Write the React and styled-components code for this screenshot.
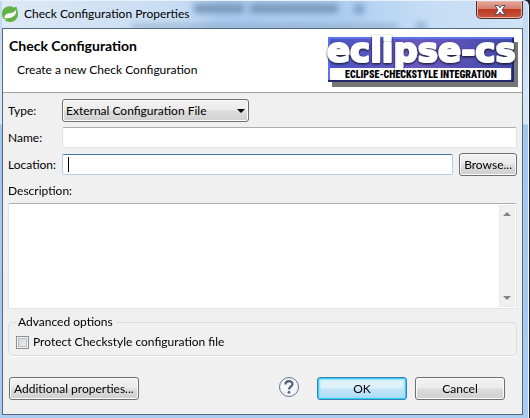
import React, { useState } from "react";
import styled, { createGlobalStyle, css } from "styled-components";

const GlobalStyle = createGlobalStyle`
  * {
    box-sizing: border-box;
  }
  body {
    margin: 0;
    background: #20242a;
    color: #000;
    font-family: Lato, "Open Sans", sans-serif;
    font-size: 12px;
    line-height: 16px;
  }
  button, input, select, textarea {
    font: inherit;
    color: inherit;
  }
`;

const Window = styled.div`
  min-height: 100vh;
  display: flex;
  flex-direction: column;
  padding: 0 5px 3px 2px;
  border-top: 1px solid #e8f1fa;
  border-right: 1px solid #e8f1fa;
  margin-right: 1px;
  border-radius: 0 6px 0 0;
  background: linear-gradient(#c3daf1 0, #c3daf1 28px, #d6e6f7 100px, #d6e6f7 123px, #a3c6ec 124px, #a9cdf2 100%);
`;

const TitleBar = styled.div`
  height: 27px;
  display: flex;
  align-items: flex-start;
  position: relative;
`;

const Backdrop = styled.div`
  position: absolute;
  inset: 0;
  overflow: hidden;
  background: linear-gradient(90deg, #dde9f6, #c6dbf2 35%, #a9caef 42%, #aecdf0 65%, #c4dcf4 80%, #cfe2f6);
  &:before {
    content: "";
    position: absolute;
    inset: 0;
    filter: blur(3px);
    background:
      linear-gradient(#7896b6, #7896b6) 192px 3px / 50px 9px no-repeat,
      linear-gradient(#7896b6, #7896b6) 248px 3px / 88px 9px no-repeat,
      linear-gradient(#7ba1cd, #7ba1cd) 352px 3px / 10px 10px no-repeat,
      linear-gradient(#809ebf, #809ebf) 130px 24px / 266px 6px no-repeat,
      linear-gradient(#7ba1cd, #7ba1cd) 414px 22px / 10px 7px no-repeat;
  }
`;

const Title = styled.div`
  flex: 1;
  display: flex;
  align-items: center;
  gap: 6px;
  height: 25px;
  position: relative;
`;

const CloseButton = styled.button`
  width: 47px;
  height: 18px;
  padding: 0;
  position: relative;
  display: flex;
  justify-content: center;
  align-items: center;
  border: 1px solid #5a2a2a;
  border-top: 0;
  border-radius: 0 0 5px 5px;
  box-shadow: inset 0 0 0 1px #e9b4a8;
  background: linear-gradient(#e6a99c, #d5806f 45%, #bb3a22 50%, #c8563b);
`;

const Client = styled.main`
  flex: 1;
  display: flex;
  flex-direction: column;
  border: 1px solid #56677c;
  background: #f0f0f0;
`;

const Header = styled.header`
  height: 64px;
  display: flex;
  justify-content: space-between;
  padding: 2px 2px 0 6px;
  background: #fff;
  border-bottom: 1px solid #a0a0a0;
`;

const Heading = styled.h1`
  margin: 7px 0 8px;
  font-size: 14px;
  font-weight: 700;
  line-height: 16px;
`;

const Subtitle = styled.p`
  margin: 0 8px;
`;

const Form = styled.form`
  flex: 1;
  display: flex;
  flex-direction: column;
  padding: 6px 5px 14px;
`;

const Fields = styled.div`
  display: grid;
  grid-template-columns: 48px 1fr auto;
  gap: 5px 6px;
  align-items: center;
`;

const field = css`
  border: 1px solid #e2e3ea;
  border-top-color: #abadb3;
  border-radius: 2px;
  background: #fff;
  outline: none;
`;

const TextInput = styled.input`
  ${field}
  width: 100%;
  height: 21px;
  padding: 0 5px;
  grid-column: ${(props) => (props.$wide ? "span 2" : "auto")};
  caret-color: transparent;
  &:focus {
    border-color: #b5cfe7;
    border-top-color: #3d7bad;
  }
  &:focus:placeholder-shown {
    background: linear-gradient(#000, #000) 5px 2px / 1px 15px no-repeat #fff;
  }
`;

const buttonFace = css`
  border: 1px solid #707070;
  border-radius: 3px;
  box-shadow: inset 0 0 0 1px #fbfbfb;
  background: linear-gradient(#f2f2f2, #ebebeb 48%, #dddddd 52%, #cfcfcf);
`;

const SelectWrap = styled.div`
  grid-column: span 2;
  justify-self: start;
  display: flex;
  align-items: center;
  position: relative;
  svg {
    position: absolute;
    right: 4px;
    pointer-events: none;
  }
`;

const Select = styled.select`
  ${buttonFace}
  appearance: none;
  width: 187px;
  height: 23px;
  padding: 0 18px 0 3px;
`;

const Button = styled.button`
  ${buttonFace}
  height: 23px;
  min-width: ${(props) => (props.$wide ? "90px" : "57px")};
  padding: 0 4px;
  white-space: nowrap;
  ${(props) =>
    props.$primary &&
    css`
      border-color: #3c7fb1;
      box-shadow: inset 0 0 0 1px #35cdf8, inset 0 0 2px 2px #8fe0fa;
      background: linear-gradient(#e6f4fc, #dcf0fb 48%, #c2e5f8 52%, #b0dcf5);
    `}
`;

const DescriptionLabel = styled.label`
  margin: 7px 0 4px;
`;

const AreaWrap = styled.div`
  ${field}
  flex: 1;
  min-height: 80px;
  display: flex;
  padding: 1px;
`;

const TextArea = styled.textarea`
  flex: 1;
  min-width: 0;
  padding: 2px 4px;
  border: 0;
  outline: none;
  resize: none;
  overflow: hidden;
`;

const ScrollBar = styled.div`
  width: 16px;
  display: flex;
  flex-direction: column;
  justify-content: space-between;
  align-items: center;
  padding: 6px 0;
  background: #f0f0f0;
  border: 1px solid #e9e9e9;
`;

const Group = styled.fieldset`
  margin: 5px 0 21px;
  padding: 4px 7px 5px;
  min-width: 0;
  border: 1px solid #d5dfe5;
  border-radius: 4px;
  box-shadow: 0 1px 0 #fff;
  legend {
    padding: 0 2px;
  }
`;

const CheckLabel = styled.label`
  display: flex;
  align-items: center;
  gap: 4px;
`;

const CheckBox = styled.input`
  appearance: none;
  width: 13px;
  height: 13px;
  margin: 0;
  border: 1px solid #8e8f8f;
  box-shadow: inset 0 0 0 1px #f4f4f4, inset 0 0 0 2px #b8bec6;
  background: linear-gradient(135deg, #cbcfd5, #f6f6f6);
  &:checked {
    background: #4a6fa5;
  }
`;

const Footer = styled.footer`
  display: flex;
  gap: 8px;
  padding: 0 12px 0 1px;
`;

const HelpButton = styled.button`
  width: 22px;
  height: 22px;
  margin: 0 9px 0 auto;
  padding: 0;
  border: 0;
  background: none;
`;

function SpringIcon() {
  return (
    <svg width="16" height="16" viewBox="0 0 16 16">
      <path d="M14 0c-.5 1.200-1.200 1.600-2 1.400C6-1.500 0 2 0 8c0 4.500 3.500 8 8 8 4.500 0 8-3.500 8-8 0-3-1-6-2-8z" fill="#62b146" />
      <path d="M14 3.500c-1 2.500-3.500 3.300-6.500 3.700C4 7.700 2 9.500 2.500 12c4.500 1 9-.5 10.800-3.500 1-1.700 1.200-3.500.7-5z" fill="#f6fbf3" />
      <circle cx="3" cy="13.500" r=".8" fill="#f6fbf3" />
    </svg>
  );
}

function CloseIcon() {
  return (
    <svg width="12" height="10" viewBox="0 0 12 10">
      <path
        d="M1 .5h3L6 2.800 8 .5h3L8 5l3 4.500H8L6 7.200 4 9.500H1L4 5z"
        fill="#fff"
        stroke="#47505f"
        strokeWidth="1"
      />
    </svg>
  );
}

function Arrow({ up, color = "#000" }) {
  return (
    <svg width="8" height="4" viewBox="0 0 8 4">
      <path d={up ? "M0 4L4 0l4 4z" : "M0 0h8L4 4z"} fill={color} />
    </svg>
  );
}

function HelpIcon() {
  return (
    <svg width="22" height="22" viewBox="0 0 22 22">
      <circle cx="11" cy="10" r="9.500" fill="#f4f5f8" stroke="#66738f" />
      <path
        d="M7.500 7.500C7.500 3 14.500 3 14.500 7c0 2.600-3.500 2.600-3.500 5.500"
        fill="none"
        stroke="#53617f"
        strokeWidth="2.200"
      />
      <circle cx="11" cy="15.300" r="1.400" fill="#53617f" />
    </svg>
  );
}

function Logo() {
  return (
    <svg width="197" height="60" viewBox="0 0 197 60" role="img" aria-label="eclipse-cs">
      <defs>
        <linearGradient id="logoBlue" x1="0" x2="1">
          <stop offset="0" stopColor="#4a55c4" />
          <stop offset="0.5" stopColor="#6a58c0" />
          <stop offset="1" stopColor="#4048a8" />
        </linearGradient>
        <filter id="logoShadow" x="-10%" y="-20%" width="120%" height="150%">
          <feDropShadow dx="0" dy="1" stdDeviation="1" floodColor="#111" floodOpacity="1" />
        </filter>
        <filter id="panelShadow" x="-5%" y="-10%" width="110%" height="120%">
          <feGaussianBlur stdDeviation="0.7" />
        </filter>
      </defs>
      <rect x="9" y="11" width="186" height="45" fill="#777" filter="url(#panelShadow)" />
      <rect x="5" y="6" width="186" height="45" fill="url(#logoBlue)" />
      <path d="M6 51V7h185" fill="none" stroke="#5c72ee" strokeWidth="2" />
      <path d="M5 50h185V7" fill="none" stroke="#23296f" strokeWidth="2" />
      <rect x="7" y="37" width="181" height="12" rx="1" fill="#fff" />
      <text
        x="98"
        y="47"
        textAnchor="middle"
        fontFamily="Roboto Condensed, Roboto, sans-serif"
        fontWeight="900"
        fontSize="10"
      >
        ECLIPSE-CHECKSTYLE INTEGRATION
      </text>
      <text
        x="4"
        y="31"
        fontFamily="DejaVu Sans, sans-serif"
        fontWeight="700"
        fontSize="34"
        fill="#fff"
        stroke="#fff"
        strokeWidth="2"
        strokeLinejoin="round"
        filter="url(#logoShadow)"
      >
        eclipse-cs
      </text>
    </svg>
  );
}

export default function App() {
  const [name, setName] = useState("");
  const [location, setLocation] = useState("");

  return (
    <Window>
      <GlobalStyle />
      <TitleBar>
        <Backdrop />
        <Title>
          <SpringIcon />
          Check Configuration Properties
        </Title>
        <CloseButton aria-label="Close">
          <CloseIcon />
        </CloseButton>
      </TitleBar>
      <Client>
        <Header>
          <div>
            <Heading>Check Configuration</Heading>
            <Subtitle>Create a new Check Configuration</Subtitle>
          </div>
          <Logo />
        </Header>
        <Form onSubmit={(e) => e.preventDefault()}>
          <Fields>
            <label htmlFor="type">Type:</label>
            <SelectWrap>
              <Select id="type">
                <option>External Configuration File</option>
              </Select>
              <Arrow />
            </SelectWrap>
            <label htmlFor="name">Name:</label>
            <TextInput id="name" $wide value={name} onChange={(e) => setName(e.target.value)} />
            <label htmlFor="location">Location:</label>
            <TextInput
              id="location"
              autoFocus
              placeholder=" "
              value={location}
              onChange={(e) => setLocation(e.target.value)}
            />
            <Button type="button">Browse...</Button>
          </Fields>
          <DescriptionLabel htmlFor="description">Description:</DescriptionLabel>
          <AreaWrap>
            <TextArea id="description" />
            <ScrollBar>
              <Arrow up color="#858585" />
              <Arrow color="#858585" />
            </ScrollBar>
          </AreaWrap>
          <Group>
            <legend>Advanced options</legend>
            <CheckLabel>
              <CheckBox type="checkbox" />
              Protect Checkstyle configuration file
            </CheckLabel>
          </Group>
          <Footer>
            <Button type="button">Additional properties...</Button>
            <HelpButton type="button" aria-label="Help">
              <HelpIcon />
            </HelpButton>
            <Button $wide $primary>OK</Button>
            <Button type="button" $wide>Cancel</Button>
          </Footer>
        </Form>
      </Client>
    </Window>
  );
}
